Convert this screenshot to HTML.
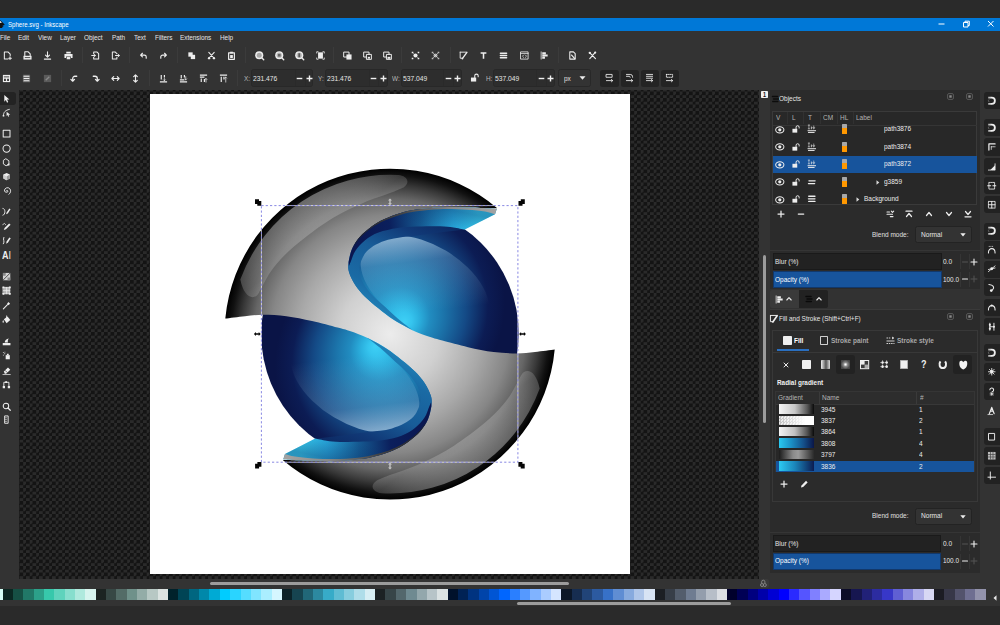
<!DOCTYPE html><html><head><meta charset="utf-8"><title>Sphere.svg - Inkscape</title><style>
*{box-sizing:border-box;margin:0;padding:0}
html,body{width:1000px;height:625px;overflow:hidden;background:#2a2a2a}
body{position:relative;font-family:"Liberation Sans","DejaVu Sans",sans-serif;font-size:7.55px;color:#e0e0e0;line-height:1}
.a{position:absolute}
.t{position:absolute;white-space:nowrap;line-height:10px;height:10px;transform:scaleX(0.86);transform-origin:0 50%}
.b{font-weight:bold}
svg{position:absolute;overflow:visible;stroke-width:1.15}
.ic{fill:none;stroke:#eee;stroke-linecap:round;stroke-linejoin:round}
.fi{fill:#eee;stroke:none}
</style></head><body>
<div class="a" style="left:0px;top:0px;width:1000px;height:18px;background:#2a2a2a;"></div>
<div class="a" style="left:0px;top:18px;width:1000px;height:12.5px;background:#0078d7;"></div>
<div class="a" style="left:0px;top:30.5px;width:1000px;height:59.5px;background:#333333;"></div>
<div class="t " style="left:8px;top:19.6px;color:#ffffff;font-size:7.09px;">Sphere.svg - Inkscape</div>
<svg style="left:-4px;top:20px" width="9" height="9" viewBox="0 0 9 9"><path d="M4.5 0.3 L8.6 4.4 Q8.8 5 8 5.2 L6.5 5.6 L7.6 6.6 L6 7 L6.6 8 L2.2 8 L3 7 L1.2 6.6 L2.5 5.6 L1 5.2 Q0.2 5 0.4 4.4 Z" fill="#111"/><path d="M4.5 1 L6.3 2.9 L5.3 2.5 L4.5 3 L3.7 2.5 L2.7 2.9 Z" fill="#fff"/></svg>
<svg style="left:930px;top:18px" width="70" height="12" viewBox="0 0 70 12"><g stroke="#fff" stroke-width="1" fill="none"><path d="M8.5 6h6"/><path d="M33.5 4.5h4.5v4.5h-4.5z M35 4.5v-1.3h4.3v4.3h-1.3"/><path d="M58 3l5.5 5.5M63.5 3l-5.500 5.5"/></g></svg>
<div class="t " style="left:0px;top:32.5px;color:#e4e4e4;font-size:7.44px;">File</div>
<div class="t " style="left:18px;top:32.5px;color:#e4e4e4;font-size:7.44px;">Edit</div>
<div class="t " style="left:38px;top:32.5px;color:#e4e4e4;font-size:7.44px;">View</div>
<div class="t " style="left:60px;top:32.5px;color:#e4e4e4;font-size:7.44px;">Layer</div>
<div class="t " style="left:84px;top:32.5px;color:#e4e4e4;font-size:7.44px;">Object</div>
<div class="t " style="left:112px;top:32.5px;color:#e4e4e4;font-size:7.44px;">Path</div>
<div class="t " style="left:134px;top:32.5px;color:#e4e4e4;font-size:7.44px;">Text</div>
<div class="t " style="left:155px;top:32.5px;color:#e4e4e4;font-size:7.44px;">Filters</div>
<div class="t " style="left:180px;top:32.5px;color:#e4e4e4;font-size:7.44px;">Extensions</div>
<div class="t " style="left:219.5px;top:32.5px;color:#e4e4e4;font-size:7.44px;">Help</div>
<svg style="left:2.50px;top:50.70px" width="9.0" height="9.0" viewBox="0 0 10 10" ><path class="ic" d="M1.5 1h4l2.500 2.500V5M1.500 1v8h4"/><path class="ic" d="M7.800 6.500v3M6.300 8h3" stroke-width="1.2"/></svg>
<svg style="left:22.50px;top:50.70px" width="9.0" height="9.0" viewBox="0 0 10 10" ><path class="fi" d="M0.500 5.300h9v4.200h-9z"/><path class="ic" d="M2 5v-4.200h3.500l2.500 2.500v1.700" stroke-width="1.200"/><path d="M2 7.300h6" stroke="#333" stroke-width="0.900"/></svg>
<svg style="left:43.00px;top:50.70px" width="9.0" height="9.0" viewBox="0 0 10 10" ><path class="ic" d="M5 1v5.500M2.800 4.500l2.200 2.300l2.200-2.300M1.500 9h7" stroke-width="1.2"/></svg>
<svg style="left:63.50px;top:50.70px" width="9.0" height="9.0" viewBox="0 0 10 10" ><path class="fi" d="M0.500 3.300h9v4.500h-1.800v-1.800h-5.400v1.800h-1.800z"/><path class="fi" d="M2.500 0.800h5v2h-5z"/><path class="fi" d="M3 6.700h4v2.500h-4z"/></svg>
<svg style="left:91.25px;top:50.70px" width="9.0" height="9.0" viewBox="0 0 10 10" ><path class="ic" d="M3 3v-2h3.500l2 2v6h-5.500v-2"/><path class="ic" d="M0.800 5h4M3.300 3.600l1.500 1.400l-1.500 1.400" stroke-width="1.1"/></svg>
<svg style="left:111.00px;top:50.70px" width="9.0" height="9.0" viewBox="0 0 10 10" ><path class="ic" d="M6.500 3l-2-2h-3v8h5v-2M6.500 3"/><path class="ic" d="M5 5h4.200M7.800 3.600l1.500 1.400l-1.500 1.400" stroke-width="1.1"/></svg>
<svg style="left:138.75px;top:50.70px" width="9.0" height="9.0" viewBox="0 0 10 10" ><path class="ic" d="M2 4.500h4a2 2 0 0 1 2 2v1.500M3.800 2.500l-2 2l2 2" stroke-width="1.3"/></svg>
<svg style="left:158.50px;top:50.70px" width="9.0" height="9.0" viewBox="0 0 10 10" ><path class="ic" d="M8 4.500h-4a2 2 0 0 0 -2 2v1.500M6.200 2.500l2 2l-2 2" stroke-width="1.3"/></svg>
<svg style="left:186.75px;top:50.70px" width="9.0" height="9.0" viewBox="0 0 10 10" ><path class="fi" d="M1.500 1.500h4.800v4.800h-4.800z"/><path class="fi" d="M4.200 4.200h4.800v4.800h-4.800z" stroke="#333" stroke-width="0.900"/></svg>
<svg style="left:207.25px;top:50.70px" width="9.0" height="9.0" viewBox="0 0 10 10" ><path class="ic" d="M2 1.500l5.500 6M8 1.500l-5.500 6" stroke-width="1.2"/><circle class="fi" cx="2.300" cy="8" r="1.300"/><circle class="fi" cx="7.700" cy="8" r="1.300"/></svg>
<svg style="left:226.75px;top:50.70px" width="9.0" height="9.0" viewBox="0 0 10 10" ><path class="ic" d="M1.800 2h6.400v7.300h-6.400z" stroke-width="1.3"/><path class="fi" d="M3.500 0.800h3v2h-3z"/><path class="fi" d="M3.500 4.500h3v3.300h-3z"/></svg>
<svg style="left:255.00px;top:50.70px" width="9.0" height="9.0" viewBox="0 0 10 10" ><circle class="fi" cx="4.700" cy="4.700" r="4.500"/><circle cx="4.700" cy="4.700" r="2.800" fill="#a8a8a8"/><path class="ic" d="M8 8l1.700 1.700" stroke-width="1.500"/></svg>
<svg style="left:275.00px;top:50.70px" width="9.0" height="9.0" viewBox="0 0 10 10" ><circle class="fi" cx="4.700" cy="4.700" r="4.500"/><circle cx="4.700" cy="4.700" r="2.900" fill="#b8b8b8"/><path d="M3.200 3.200h3v3h-3z" fill="#666"/><path class="ic" d="M8 8l1.700 1.700" stroke-width="1.500"/></svg>
<svg style="left:295.00px;top:50.70px" width="9.0" height="9.0" viewBox="0 0 10 10" ><circle class="fi" cx="4.700" cy="4.700" r="4.500"/><circle cx="4.700" cy="4.700" r="2.900" fill="#b8b8b8"/><path d="M3.700 2.500h2v4.400h-2z" fill="#555"/><path class="ic" d="M8 8l1.700 1.700" stroke-width="1.500"/></svg>
<svg style="left:315.50px;top:50.70px" width="9.0" height="9.0" viewBox="0 0 10 10" ><path class="fi" d="M2.300 1.500h5.400v7h-5.400z"/><path class="ic" d="M0.800 2.300v-1.500h1.500M7.700 0.800h1.500v1.500M9.200 7.700v1.500h-1.500M2.300 9.200h-1.500v-1.500" stroke-width="0.900"/></svg>
<svg style="left:343.00px;top:50.70px" width="9.0" height="9.0" viewBox="0 0 10 10" ><path class="ic" d="M1.200 1.200h5.500v5.500h-5.500z" stroke-width="1.100"/><path class="fi" d="M3.800 3.800h5.700v5.700h-5.700z"/></svg>
<svg style="left:363.00px;top:50.70px" width="9.0" height="9.0" viewBox="0 0 10 10" ><path class="ic" d="M1.200 1.200h5.500v5.500h-5.500z" stroke-width="1.100"/><path d="M3.800 3.800h5.500v5.500h-5.500z" fill="#333" stroke="#eee" stroke-width="1.100"/><path class="fi" d="M5.300 6.500h2.500v2h-2.500z"/></svg>
<svg style="left:383.00px;top:50.70px" width="9.0" height="9.0" viewBox="0 0 10 10" ><path class="ic" d="M1.200 1.200h5.500v5.500h-5.500z" stroke-width="1.100"/><path d="M3.800 3.800h5.500v5.500h-5.500z" fill="#333" stroke="#eee" stroke-width="1.100"/><path class="fi" d="M5 6.500h3.200v2.200h-3.200z"/></svg>
<svg style="left:411.00px;top:50.70px" width="9.0" height="9.0" viewBox="0 0 10 10" ><circle class="fi" cx="5" cy="5" r="2.3"/><path class="fi" d="M0.800 0.800h1.800v1.800h-1.800zM7.400 0.800h1.800v1.800h-1.800zM0.800 7.400h1.800v1.800h-1.800zM7.400 7.400h1.800v1.800h-1.800z"/><path class="ic" d="M2.800 2.800l0.800 0.800M7.200 7.200l-0.800-0.800" stroke-width="0.6"/></svg>
<svg style="left:431.25px;top:50.70px" width="9.0" height="9.0" viewBox="0 0 10 10" ><circle cx="5" cy="5" r="2.3" fill="#aaa"/><path d="M0.800 0.800h1.800v1.800h-1.800zM7.400 0.800h1.800v1.800h-1.800zM0.800 7.400h1.800v1.800h-1.800zM7.400 7.400h1.800v1.800h-1.800z" fill="#bbb"/><path class="ic" d="M2.600 2.600l4.800 4.800M7.400 2.600l-4.800 4.800" stroke-width="0.6" stroke="#999"/></svg>
<svg style="left:458.50px;top:50.70px" width="9.0" height="9.0" viewBox="0 0 10 10" ><path class="ic" d="M1.300 1.300h7M1.300 1.300v6.700h2.500" stroke-width="1" stroke="#ccc"/><path class="ic" d="M8.800 1.500l-4.500 6.200" stroke-width="1.500"/><circle class="fi" cx="3.800" cy="8.400" r="1"/></svg>
<svg style="left:479.25px;top:50.70px" width="9.0" height="9.0" viewBox="0 0 10 10" ><path class="ic" d="M1.800 2.200h6.400M5 2.200v6.300" stroke-width="1.700" style="stroke-linecap:butt"/></svg>
<svg style="left:499.25px;top:50.70px" width="9.0" height="9.0" viewBox="0 0 10 10" ><path class="ic" d="M1.500 2.500h7M1.500 5h7M1.500 7.500h7" stroke-width="1.500"/></svg>
<svg style="left:519.75px;top:50.70px" width="9.0" height="9.0" viewBox="0 0 10 10" ><path class="ic" d="M1 1h8v8h-8z" stroke-width="0.9"/><path class="ic" d="M1 2.800h8" stroke-width="0.8"/><path class="ic" d="M4 4.500l-1.300 1.300l1.300 1.300M6 4.500l1.300 1.300l-1.300 1.300" stroke-width="0.8"/></svg>
<svg style="left:539.75px;top:50.70px" width="9.0" height="9.0" viewBox="0 0 10 10" ><path class="ic" d="M1.300 1v8" stroke-width="0.9"/><path class="fi" d="M2.500 1.500h4v2h-4zM2.500 4h6v2h-6zM2.500 6.500h3v2h-3z"/></svg>
<svg style="left:568.00px;top:50.70px" width="9.0" height="9.0" viewBox="0 0 10 10" ><path class="ic" d="M2 1h4l2 2v6h-6z" stroke-width="1.200"/><path class="ic" d="M4 4.500l3.500 4" stroke-width="1.300"/></svg>
<svg style="left:588.00px;top:50.70px" width="9.0" height="9.0" viewBox="0 0 10 10" ><path class="ic" d="M2 8.500l6-7M1.800 1.800l6.500 6.700" stroke-width="1.300"/><circle class="fi" cx="2" cy="2" r="1.300"/><circle class="fi" cx="8" cy="1.800" r="1.200"/></svg>
<div class="a" style="left:81.5px;top:47px;width:0.7px;height:16px;background:#3b3b3b;"></div>
<div class="a" style="left:129.0px;top:47px;width:0.7px;height:16px;background:#3b3b3b;"></div>
<div class="a" style="left:176.7px;top:47px;width:0.7px;height:16px;background:#3b3b3b;"></div>
<div class="a" style="left:244.7px;top:47px;width:0.7px;height:16px;background:#3b3b3b;"></div>
<div class="a" style="left:333.45px;top:47px;width:0.7px;height:16px;background:#3b3b3b;"></div>
<div class="a" style="left:400.95px;top:47px;width:0.7px;height:16px;background:#3b3b3b;"></div>
<div class="a" style="left:449.7px;top:47px;width:0.7px;height:16px;background:#3b3b3b;"></div>
<div class="a" style="left:558.45px;top:47px;width:0.7px;height:16px;background:#3b3b3b;"></div>
<svg style="left:2.25px;top:73.70px" width="9.0" height="9.0" viewBox="0 0 10 10" ><path class="fi" d="M1 1h8v8h-8z"/><path d="M2 3.200h6" stroke="#333" stroke-width="1"/><path d="M2.300 5.300h2v2.500h-2zM5.700 5.300h2v2.500h-2z" fill="#333"/></svg>
<svg style="left:22.25px;top:73.70px" width="9.0" height="9.0" viewBox="0 0 10 10" ><path d="M1 0.800h8v8.400h-8z" fill="#666"/><path class="ic" d="M2.300 2.500h5.400M2.300 5h5.400M2.300 7.500h5.400" stroke-width="1.300"/></svg>
<svg style="left:42.50px;top:73.70px" width="9.0" height="9.0" viewBox="0 0 10 10" ><path d="M1 1h8v8h-8z" fill="#5a5a5a"/><path d="M3 7l4-4" stroke="#888" stroke-width="1.500"/></svg>
<svg style="left:70.00px;top:73.70px" width="9.0" height="9.0" viewBox="0 0 10 10" ><path class="ic" d="M7.500 2.500h-2a2.500 2.500 0 0 0 -2.500 2.500v2.500M1 6l2 2l2-2" stroke-width="1.400"/></svg>
<svg style="left:90.50px;top:73.70px" width="9.0" height="9.0" viewBox="0 0 10 10" ><path class="ic" d="M2.500 2.500h2a2.500 2.500 0 0 1 2.500 2.500v2.500M5 6l2 2l2-2" stroke-width="1.400"/></svg>
<svg style="left:111.00px;top:73.70px" width="9.0" height="9.0" viewBox="0 0 10 10" ><path class="ic" d="M1.300 5h7.400M3 3l-2 2l2 2M7 3l2 2l-2 2" stroke-width="1.300"/></svg>
<svg style="left:131.00px;top:73.70px" width="9.0" height="9.0" viewBox="0 0 10 10" ><path class="ic" d="M5 1.300v7.400M3 3l2-2l2 2M3 7l2 2l2-2" stroke-width="1.300"/></svg>
<svg style="left:158.50px;top:73.70px" width="9.0" height="9.0" viewBox="0 0 10 10" ><path class="ic" d="M2.500 1v5M6 1v3M1 8.800h8" stroke-width="1.300" style="stroke-linecap:butt"/><path class="ic" d="M6 5v2.500M5 6.500l1 1l1-1" stroke-width="0.8"/></svg>
<svg style="left:178.75px;top:73.70px" width="9.0" height="9.0" viewBox="0 0 10 10" ><path class="ic" d="M2.500 1v4M6 1v3M1 6.500h5M1 8.800h8" stroke-width="1.300" style="stroke-linecap:butt"/><path class="ic" d="M7.500 3v3.500M6.500 5.500l1 1l1-1" stroke-width="0.8"/></svg>
<svg style="left:199.25px;top:73.70px" width="9.0" height="9.0" viewBox="0 0 10 10" ><path class="ic" d="M1 1.200h8M1 3.500h5M2.500 5v4M6 5.500v3.500" stroke-width="1.300" style="stroke-linecap:butt"/><path class="ic" d="M7.800 9v-4M6.800 6l1-1l1 1" stroke-width="0.8"/></svg>
<svg style="left:219.25px;top:73.70px" width="9.0" height="9.0" viewBox="0 0 10 10" ><path class="ic" d="M1 1.200h8M2.500 3v6M5.500 3v3" stroke-width="1.300" style="stroke-linecap:butt"/><path class="ic" d="M7.500 9v-5.500M6.500 4.500l1-1l1 1" stroke-width="0.8"/></svg>
<div class="a" style="left:60.5px;top:70px;width:0.7px;height:16px;background:#3b3b3b;"></div>
<div class="a" style="left:149.2px;top:70px;width:0.7px;height:16px;background:#3b3b3b;"></div>
<div class="a" style="left:237.2px;top:70px;width:0.7px;height:16px;background:#3b3b3b;"></div>
<div class="a" style="left:250.8px;top:69.2px;width:62.69999999999999px;height:17.4px;background:#2d2d2d;border:0.8px solid #282828;border-radius:2.5px"></div>
<div class="a" style="left:294.8px;top:70.2px;width:0.6px;height:15.6px;background:#2a2a2a;"></div>
<div class="a" style="left:304.55px;top:70.2px;width:0.6px;height:15.6px;background:#2a2a2a;"></div>
<div class="t " style="left:243.8px;top:73.6px;color:#b8b8b8;font-size:7.44px;">X:</div>
<div class="t " style="left:252.5px;top:73.6px;color:#e6e6e6;font-size:7.79px;">231.476</div>
<svg style="left:296.3px;top:74.8px" width="7" height="7" viewBox="0 0 7 7"><path d="M0.700 3.500h5.600" stroke="#f0f0f0" stroke-width="1.400"/></svg>
<svg style="left:305.8px;top:74.8px" width="7" height="7" viewBox="0 0 7 7"><path d="M0.500 3.500h6M3.500 0.500v6" stroke="#f0f0f0" stroke-width="1.400"/></svg>
<div class="a" style="left:325px;top:69.2px;width:62.5px;height:17.4px;background:#2d2d2d;border:0.8px solid #282828;border-radius:2.5px"></div>
<div class="a" style="left:368.8px;top:70.2px;width:0.6px;height:15.6px;background:#2a2a2a;"></div>
<div class="a" style="left:378.4px;top:70.2px;width:0.6px;height:15.6px;background:#2a2a2a;"></div>
<div class="t " style="left:317.8px;top:73.6px;color:#b8b8b8;font-size:7.44px;">Y:</div>
<div class="t " style="left:327px;top:73.6px;color:#e6e6e6;font-size:7.79px;">231.476</div>
<svg style="left:370.3px;top:74.8px" width="7" height="7" viewBox="0 0 7 7"><path d="M0.700 3.500h5.600" stroke="#f0f0f0" stroke-width="1.400"/></svg>
<svg style="left:379.5px;top:74.8px" width="7" height="7" viewBox="0 0 7 7"><path d="M0.500 3.500h6M3.500 0.500v6" stroke="#f0f0f0" stroke-width="1.400"/></svg>
<div class="a" style="left:401px;top:69.2px;width:61.19999999999999px;height:17.4px;background:#2d2d2d;border:0.8px solid #282828;border-radius:2.5px"></div>
<div class="a" style="left:443px;top:70.2px;width:0.6px;height:15.6px;background:#2a2a2a;"></div>
<div class="a" style="left:452.6px;top:70.2px;width:0.6px;height:15.6px;background:#2a2a2a;"></div>
<div class="t " style="left:391.8px;top:73.6px;color:#b8b8b8;font-size:7.44px;">W:</div>
<div class="t " style="left:402.8px;top:73.6px;color:#e6e6e6;font-size:7.79px;">537.049</div>
<svg style="left:444.5px;top:74.8px" width="7" height="7" viewBox="0 0 7 7"><path d="M0.700 3.500h5.600" stroke="#f0f0f0" stroke-width="1.400"/></svg>
<svg style="left:453.7px;top:74.8px" width="7" height="7" viewBox="0 0 7 7"><path d="M0.500 3.500h6M3.500 0.500v6" stroke="#f0f0f0" stroke-width="1.400"/></svg>
<div class="a" style="left:492.5px;top:69.2px;width:62.5px;height:17.4px;background:#2d2d2d;border:0.8px solid #282828;border-radius:2.5px"></div>
<div class="a" style="left:536.3px;top:70.2px;width:0.6px;height:15.6px;background:#2a2a2a;"></div>
<div class="a" style="left:545.9px;top:70.2px;width:0.6px;height:15.6px;background:#2a2a2a;"></div>
<div class="t " style="left:486px;top:73.6px;color:#b8b8b8;font-size:7.44px;">H:</div>
<div class="t " style="left:494.5px;top:73.6px;color:#e6e6e6;font-size:7.79px;">537.049</div>
<svg style="left:537.8px;top:74.8px" width="7" height="7" viewBox="0 0 7 7"><path d="M0.700 3.500h5.600" stroke="#f0f0f0" stroke-width="1.400"/></svg>
<svg style="left:547.0px;top:74.8px" width="7" height="7" viewBox="0 0 7 7"><path d="M0.500 3.500h6M3.500 0.500v6" stroke="#f0f0f0" stroke-width="1.400"/></svg>
<svg style="left:469.75px;top:73.25px" width="9.5" height="9.5" viewBox="0 0 10 10" ><path class="fi" d="M1 4.800h5.500v4.200h-5.500z"/><path class="ic" d="M5 4.800v-1.800a1.800 1.800 0 0 1 3.600 0v1" stroke-width="1.100"/></svg>
<div class="a" style="left:558.3px;top:69.2px;width:33px;height:17.4px;background:#333333;border:0.8px solid #282828;border-radius:2.5px"></div>
<div class="t " style="left:564.3px;top:73.6px;color:#e0e0e0;font-size:7.56px;">px</div>
<svg style="left:578.500px;top:76.300px" width="7" height="4" viewBox="0 0 7 4"><path d="M0.500 0.300h6l-3 3.400z" fill="#eee"/></svg>
<div class="a" style="left:600px;top:69.5px;width:18.6px;height:17.3px;background:#242424;border-radius:2.5px"></div>
<svg style="left:604.55px;top:73.45px" width="9.5" height="9.5" viewBox="0 0 10 10" ><path class="ic" d="M1.500 1.500h6v3h-6z" stroke-width="0.9"/><path class="ic" d="M1.500 8h6.500M6.800 6.800l1.300 1.200l-1.300 1.200" stroke-width="0.9"/></svg>
<div class="a" style="left:620.5px;top:69.5px;width:18.6px;height:17.3px;background:#242424;border-radius:2.5px"></div>
<svg style="left:625.05px;top:73.45px" width="9.5" height="9.5" viewBox="0 0 10 10" ><path class="ic" d="M1.500 1.500h4a2.500 2.500 0 0 1 2.500 2.500v0.500M1.500 3.500h3a1 1 0 0 1 1 1" stroke-width="0.9"/><path class="ic" d="M1.500 8h6.500M6.800 6.800l1.300 1.200l-1.300 1.200" stroke-width="0.9"/></svg>
<div class="a" style="left:640.8px;top:69.5px;width:18.6px;height:17.3px;background:#242424;border-radius:2.5px"></div>
<svg style="left:645.35px;top:73.45px" width="9.5" height="9.5" viewBox="0 0 10 10" ><path class="ic" d="M1.500 1.500h6.500M1.500 3.500h6.500M1.500 5.500h6.500" stroke-width="0.9"/><path class="ic" d="M1.500 8h6.500M6.800 6.800l1.300 1.200l-1.300 1.200" stroke-width="0.9"/></svg>
<div class="a" style="left:660.8px;top:69.5px;width:18.6px;height:17.3px;background:#242424;border-radius:2.5px"></div>
<svg style="left:665.35px;top:73.45px" width="9.5" height="9.5" viewBox="0 0 10 10" ><path class="ic" d="M1.500 1.500h6.500v3h-6.500z" stroke-width="0.9" stroke-dasharray="1 1"/><path class="ic" d="M1.500 8h6.500M6.800 6.800l1.300 1.200l-1.300 1.200" stroke-width="0.9"/></svg>
<div class="a" style="left:0px;top:90px;width:19.25px;height:500px;background:#333333;"></div>
<div class="a" style="left:0;top:91.800px;width:15.500px;height:13.400px;background:#232323;border-radius:0 3px 3px 0"></div>
<svg style="left:2.20px;top:93.60px" width="9.2" height="9.2" viewBox="0 0 10 10" ><path class="fi" d="M2.500 1l5.500 5h-2.500l1.300 2.800l-1.300 0.600l-1.300-2.800l-1.700 1.700z"/></svg>
<svg style="left:2.20px;top:108.00px" width="9.2" height="9.2" viewBox="0 0 10 10" ><path class="ic" d="M1.500 8.500c0-4 2-6 6.500-7" stroke-width="1"/><path class="fi" d="M5 4l4 3.300h-2l0.800 1.800l-1 0.400l-0.800-1.800l-1 1z"/><path class="fi" d="M0.800 7.500h1.700v1.700h-1.700z"/></svg>
<svg style="left:2.20px;top:129.20px" width="9.2" height="9.2" viewBox="0 0 10 10" ><path class="ic" d="M1.300 1.300h7.400v7.400h-7.400z" stroke-width="1.100"/></svg>
<svg style="left:2.20px;top:143.90px" width="9.2" height="9.2" viewBox="0 0 10 10" ><circle class="ic" cx="5" cy="5" r="3.900" stroke-width="1.100"/></svg>
<svg style="left:2.20px;top:158.00px" width="9.2" height="9.2" viewBox="0 0 10 10" ><path class="ic" d="M4.500 1l3 2v3.500l-3 2l-3-2v-3.500z" stroke-width="1"/><path class="fi" d="M7 6l2.300 0.500l-1.600 0.800l0.300 1.700l-1.300-1.200l-1.400 0.800l0.700-1.500z"/></svg>
<svg style="left:2.20px;top:172.00px" width="9.2" height="9.2" viewBox="0 0 10 10" ><path class="fi" d="M5 1l3.500 1.800v4.400l-3.500 1.800l-3.500-1.800v-4.400z"/><path d="M5 5v4l3.500-1.800v-4.400z" fill="#999"/><path d="M5 5l-3.500-2.200v4.400l3.500 1.800z" fill="#ccc"/></svg>
<svg style="left:2.20px;top:186.40px" width="9.2" height="9.2" viewBox="0 0 10 10" ><path class="ic" d="M5 5a1 1 0 0 1 1.500 1a2.300 2.300 0 0 1 -3.800 -0.500a3.300 3.300 0 0 1 5.800 -2.500a4 4 0 0 1 -1 6" stroke-width="1"/></svg>
<svg style="left:2.20px;top:207.20px" width="9.2" height="9.2" viewBox="0 0 10 10" ><path class="ic" d="M1 1.500c3 0 3 7 0 7.500" stroke-width="1"/><path class="fi" d="M5 6l3-4.500l1.300 1l-3 4.500l-1.800 0.800z"/></svg>
<svg style="left:2.20px;top:222.00px" width="9.2" height="9.2" viewBox="0 0 10 10" ><path class="ic" d="M1 3c1-2 2-2 3 0" stroke-width="0.900"/><path class="fi" d="M2 8.800l0.800-2.300l5-5l1.500 1.500l-5 5z"/></svg>
<svg style="left:2.20px;top:236.40px" width="9.2" height="9.2" viewBox="0 0 10 10" ><path class="ic" d="M2 1.500c-1.500 3 1.500 4-0.500 7" stroke-width="1"/><path class="fi" d="M4.500 8.500l0.500-2.500l3-4.500l1.500 1l-3 4.500z"/></svg>
<svg style="left:2.20px;top:271.60px" width="9.2" height="9.2" viewBox="0 0 10 10" ><path class="fi" d="M1 1h8v8h-8z" opacity="0.850"/><path d="M1 9l8-8" stroke="#444" stroke-width="1"/><path d="M1 1h3v3h-3zM6 6h3v3h-3z" fill="#888"/></svg>
<svg style="left:2.20px;top:286.40px" width="9.2" height="9.2" viewBox="0 0 10 10" ><path class="fi" d="M1.500 1.500h7v7h-7z" opacity="0.700"/><path class="ic" d="M1.500 1.500h7v7h-7zM1.500 5h7M5 1.500v7" stroke-width="0.800"/><path class="fi" d="M0.500 0.500h2v2h-2zM7.500 0.500h2v2h-2zM0.500 7.500h2v2h-2zM7.500 7.500h2v2h-2z"/></svg>
<svg style="left:2.20px;top:300.80px" width="9.2" height="9.2" viewBox="0 0 10 10" ><path class="ic" d="M1.500 8.500l4.500-4.500" stroke-width="1.200"/><path class="fi" d="M5.500 3l1.500-1.800l1.800 1.800l-1.800 1.500z"/></svg>
<svg style="left:2.20px;top:315.20px" width="9.2" height="9.2" viewBox="0 0 10 10" ><path class="fi" d="M2 4.500l4-3l3 4l-4 3.500z"/><path class="fi" d="M1.300 5.500c-1 1.500-1 3 0 3s1-1.500 0-3z"/><path class="ic" d="M5 1v3" stroke-width="0.900"/></svg>
<svg style="left:2.20px;top:337.00px" width="9.2" height="9.2" viewBox="0 0 10 10" ><path class="fi" d="M0.800 9v-2.500h8.400v2.500z"/><path class="fi" d="M3 6c0-2.500 1.500-4 4.500-4.500c-1 1-1.500 2.500-1 4.500z"/></svg>
<svg style="left:2.20px;top:351.40px" width="9.2" height="9.2" viewBox="0 0 10 10" ><path class="fi" d="M4 4.500h4.500v4.500h-4.500z"/><path class="fi" d="M5.300 3h2v1.500h-2z"/><path class="fi" d="M1 1h1v1h-1zM2.500 2.500h1v1h-1zM1 4h1v1h-1zM2.800 0.800h0.800v0.800h-0.800z"/></svg>
<svg style="left:2.20px;top:365.80px" width="9.2" height="9.2" viewBox="0 0 10 10" ><path class="fi" d="M2 6l4.500-4.500l2.500 2.500l-4.500 4.500h-1.500z"/><path d="M3.300 4.700l2.500 2.500" stroke="#333" stroke-width="0.800"/><path class="ic" d="M1 9.300h8" stroke-width="0.800"/></svg>
<svg style="left:2.20px;top:379.60px" width="9.2" height="9.2" viewBox="0 0 10 10" ><path class="ic" d="M2 7v-4.500h5.500v4.500" stroke-width="1"/><path class="fi" d="M0.800 6.500h2.500v2.500h-2.500zM6.300 6.500h2.500v2.500h-2.500zM3.500 1.300h2v2h-2z"/></svg>
<svg style="left:2.20px;top:401.60px" width="9.2" height="9.2" viewBox="0 0 10 10" ><circle class="ic" cx="4.300" cy="4.300" r="3" stroke-width="1.100"/><path class="ic" d="M6.500 6.500l2.500 2.500" stroke-width="1.300"/></svg>
<svg style="left:2.20px;top:415.40px" width="9.2" height="9.2" viewBox="0 0 10 10" ><path class="ic" d="M3.300 1h3.400v8h-3.400z" stroke-width="1"/><path class="ic" d="M3.500 3h1.500M3.500 5h1.500M3.500 7h1.500" stroke-width="0.600"/></svg>
<div class="t b" style="left:2.2px;top:250.6px;color:#eeeeee;font-size:10.47px;">A<span style="font-weight:normal">I</span></div>
<div class="a" id="canvas" style="left:19.25px;top:90px;width:739.75px;height:489px;overflow:hidden;background-color:#141414;background-image:conic-gradient(#2a2a2a 25%,#141414 0 50%,#2a2a2a 0 75%,#141414 0);background-size:6.5px 6.5px;background-position:0.5px 1.5px"></div>
<div class="a" style="left:150.4px;top:94.4px;width:479.6px;height:480px;background:#ffffff;"></div>
<svg class="a" style="left:0;top:0" width="1000" height="625" viewBox="0 0 1000 625">
<defs>
<radialGradient id="gBall" gradientUnits="userSpaceOnUse" cx="385" cy="302" r="120" fx="405" fy="322"><stop offset="0" stop-color="#3ed0f6"/><stop offset="0.07" stop-color="#35c4ee"/><stop offset="0.14" stop-color="#2bb0de"/><stop offset="0.25" stop-color="#218cc0"/><stop offset="0.376" stop-color="#1c76ac"/><stop offset="0.61" stop-color="#144a86"/><stop offset="0.83" stop-color="#0c1c54"/><stop offset="1" stop-color="#0a1446"/></radialGradient>
<clipPath id="cHalf"><path d="M190 244.1L590 424.1V120H190Z"/></clipPath>
<radialGradient id="gShell" gradientUnits="userSpaceOnUse" cx="390.0" cy="334.1" r="165.4"><stop offset="0" stop-color="#ececec"/><stop offset="0.3" stop-color="#d0d0d0"/><stop offset="0.55" stop-color="#a8a8a8"/><stop offset="0.72" stop-color="#868686"/><stop offset="0.82" stop-color="#666"/><stop offset="0.9" stop-color="#383838"/><stop offset="0.96" stop-color="#111"/><stop offset="1" stop-color="#000"/></radialGradient>
<linearGradient id="gUnder" gradientUnits="userSpaceOnUse" x1="352" y1="240" x2="480" y2="228"><stop offset="0" stop-color="#0a1650"/><stop offset="0.3" stop-color="#0b1f5c"/><stop offset="0.55" stop-color="#155a92"/><stop offset="0.8" stop-color="#29ace0"/><stop offset="1" stop-color="#3cdcfc"/></linearGradient>
<linearGradient id="gUnderV" gradientUnits="userSpaceOnUse" x1="440" y1="208" x2="436" y2="228"><stop offset="0" stop-color="#0b2a60" stop-opacity="0.4"/><stop offset="1" stop-color="#0b2a60" stop-opacity="0"/></linearGradient>
<linearGradient id="gEdge" gradientUnits="userSpaceOnUse" x1="350" y1="0" x2="497" y2="0"><stop offset="0" stop-color="#1e1e1e"/><stop offset="0.35" stop-color="#444"/><stop offset="0.7" stop-color="#8a8a8a"/><stop offset="1" stop-color="#a4a4a4"/></linearGradient>
<linearGradient id="gHi" gradientUnits="userSpaceOnUse" x1="376" y1="238" x2="434" y2="312"><stop offset="0" stop-color="#d4ecfa" stop-opacity="0.88"/><stop offset="0.45" stop-color="#b0dcf4" stop-opacity="0.22"/><stop offset="1" stop-color="#b0dcf4" stop-opacity="0"/></linearGradient>
<linearGradient id="gGloss" gradientUnits="userSpaceOnUse" x1="290" y1="200" x2="318" y2="238"><stop offset="0" stop-color="#fff" stop-opacity="0.42"/><stop offset="1" stop-color="#fff" stop-opacity="0.16"/></linearGradient>
<linearGradient id="gRim" gradientUnits="userSpaceOnUse" x1="450" y1="225" x2="400" y2="330"><stop offset="0" stop-color="#0d2a64"/><stop offset="0.2" stop-color="#113a78"/><stop offset="0.45" stop-color="#185c98"/><stop offset="0.75" stop-color="#1a6aa4"/><stop offset="1" stop-color="#2288bd"/></linearGradient>
</defs>
<g id="half">
<circle cx="390.0" cy="334.1" r="128.8" fill="url(#gBall)" clip-path="url(#cHalf)"/>
<ellipse cx="425" cy="286" rx="71" ry="41" transform="rotate(31 425 286)" fill="url(#gHi)"/>
</g>
<use href="#half" transform="rotate(180 390.0 334.1)"/>
<path d="M497.3 208.2 C494.7 208.2 486.9 208.0 482.0 207.9 C477.1 207.8 474.6 207.5 468.0 207.4 C461.4 207.3 450.9 206.8 442.4 207.2 C433.9 207.5 423.9 208.5 416.8 209.5 C409.7 210.5 405.5 211.6 400.0 213.2 C394.5 214.8 388.7 217.1 384.0 219.3 C379.3 221.5 376.1 223.3 372.0 226.3 C367.9 229.3 362.8 233.5 359.5 237.3 C356.2 241.1 353.8 244.9 352.0 249.0 C350.2 253.1 349.1 258.2 348.6 262.0 C348.1 265.8 347.9 268.1 349.0 272.0 C350.1 275.9 352.7 281.2 355.4 285.3 C358.1 289.4 361.2 293.0 365.0 296.8 C368.8 300.6 373.6 304.5 378.4 308.3 C383.2 312.1 387.9 316.1 393.7 319.8 C399.4 323.5 406.8 327.5 412.9 330.4 C419.0 333.3 425.3 335.4 430.2 337.1 C435.1 338.8 436.1 338.9 442.4 340.6 C448.7 342.3 459.5 345.3 468.0 347.2 C476.5 349.1 485.5 351.0 493.6 352.0 C501.7 353.0 509.8 353.4 516.7 353.4 C523.6 353.4 528.7 352.6 535.0 352.0 C541.3 351.4 551.4 350.0 554.7 349.6 A165.4 165.4 0 0 1 282.7 460.0 C285.3 460.0 293.1 460.2 298.0 460.3 C302.9 460.4 305.4 460.7 312.0 460.8 C318.6 460.9 329.1 461.4 337.6 461.0 C346.1 460.7 356.1 459.7 363.2 458.7 C370.3 457.7 374.5 456.6 380.0 455.0 C385.5 453.4 391.3 451.1 396.0 448.9 C400.7 446.7 403.9 444.9 408.0 441.9 C412.1 438.9 417.2 434.7 420.5 430.9 C423.8 427.1 426.2 423.3 428.0 419.2 C429.8 415.1 430.9 410.0 431.4 406.2 C431.9 402.4 432.1 400.1 431.0 396.2 C429.9 392.3 427.3 387.0 424.6 382.9 C421.9 378.8 418.8 375.2 415.0 371.4 C411.2 367.6 406.4 363.7 401.6 359.9 C396.8 356.1 392.1 352.1 386.3 348.4 C380.6 344.7 373.2 340.7 367.1 337.8 C361.0 334.9 354.7 332.8 349.8 331.1 C344.9 329.4 343.9 329.3 337.6 327.6 C331.3 325.9 320.5 322.9 312.0 321.0 C303.5 319.1 294.5 317.2 286.4 316.2 C278.3 315.2 270.2 314.8 263.3 314.8 C256.4 314.8 251.3 315.6 245.0 316.2 C238.7 316.8 228.6 318.2 225.3 318.6 A165.4 165.4 0 0 1 497.3 208.2Z" fill="url(#gShell)"/>
<g id="half2">
<path d="M464.8 229.6 C462.9 229.2 457.6 228.0 453.5 227.4 C449.4 226.8 446.1 226.3 440.0 226.2 C433.9 226.1 423.9 226.3 416.8 226.6 C409.7 226.9 404.0 227.0 397.6 228.0 C391.2 229.0 383.8 230.5 378.4 232.5 C373.0 234.5 368.8 237.2 365.0 240.2 C361.2 243.2 357.8 247.1 355.4 250.7 C353.0 254.3 351.7 259.4 350.6 262.0 C349.5 264.6 349.2 265.3 348.9 266.0 L348.6 262.0 C348.7 263.7 347.9 268.1 349.0 272.0 C350.1 275.9 352.7 281.2 355.4 285.3 C358.1 289.4 361.2 293.0 365.0 296.8 C368.8 300.6 373.6 304.5 378.4 308.3 C383.2 312.1 387.9 316.1 393.7 319.8 C399.4 323.5 409.7 328.6 412.9 330.4 C410.4 328.5 402.6 322.7 398.0 318.8 C393.4 314.9 389.2 310.6 385.0 306.8 C380.8 303.0 376.3 299.3 373.0 295.8 C369.7 292.3 367.1 289.1 365.0 286.0 C362.9 282.9 361.5 280.0 360.5 277.0 C359.5 274.0 359.0 270.8 359.2 268.0 C359.4 265.2 360.4 262.7 361.6 260.0 C362.8 257.3 364.0 254.4 366.4 251.8 C368.8 249.2 372.4 246.6 376.0 244.6 C379.6 242.6 384.0 241.0 388.0 239.8 C392.0 238.6 396.0 238.0 400.0 237.4 C404.0 236.8 407.0 236.8 412.0 236.2 C417.0 235.6 423.7 234.6 430.0 233.8 C436.3 233.0 444.2 232.0 450.0 231.3 C455.8 230.6 462.3 229.9 464.8 229.6Z" fill="url(#gRim)"/>
<path d="M496.7 208.9 C494.2 208.7 486.8 208.2 482.0 207.9 C477.2 207.7 474.6 207.5 468.0 207.4 C461.4 207.3 450.9 206.8 442.4 207.2 C433.9 207.5 423.9 208.5 416.8 209.5 C409.7 210.5 405.5 211.6 400.0 213.2 C394.5 214.8 388.7 217.1 384.0 219.3 C379.3 221.5 376.1 223.3 372.0 226.3 C367.9 229.3 362.8 233.5 359.5 237.3 C356.2 241.1 353.8 244.9 352.0 249.0 C350.2 253.1 349.2 259.8 348.6 262.0 L348.9 266.0 C349.2 265.3 349.5 264.6 350.6 262.0 C351.7 259.4 353.0 254.3 355.4 250.7 C357.8 247.1 361.2 243.2 365.0 240.2 C368.8 237.2 373.0 234.5 378.4 232.5 C383.8 230.5 391.2 229.0 397.6 228.0 C404.0 227.0 409.7 226.9 416.8 226.6 C423.9 226.3 433.9 226.1 440.0 226.2 C446.1 226.3 449.4 226.8 453.5 227.4 C457.6 228.0 462.9 229.2 464.8 229.6 L495 214.3Z" fill="url(#gUnder)"/>
<path d="M496.7 208.9 C494.2 208.7 486.8 208.2 482.0 207.9 C477.2 207.7 474.6 207.5 468.0 207.4 C461.4 207.3 450.9 206.8 442.4 207.2 C433.9 207.5 423.9 208.5 416.8 209.5 C409.7 210.5 405.5 211.6 400.0 213.2 C394.5 214.8 388.7 217.1 384.0 219.3 C379.3 221.5 376.1 223.3 372.0 226.3 C367.9 229.3 362.8 233.5 359.5 237.3 C356.2 241.1 353.8 244.9 352.0 249.0 C350.2 253.1 349.2 259.8 348.6 262.0 L348.9 266.0 C349.2 265.3 349.5 264.6 350.6 262.0 C351.7 259.4 353.0 254.3 355.4 250.7 C357.8 247.1 361.2 243.2 365.0 240.2 C368.8 237.2 373.0 234.5 378.4 232.5 C383.8 230.5 391.2 229.0 397.6 228.0 C404.0 227.0 409.7 226.9 416.8 226.6 C423.9 226.3 433.9 226.1 440.0 226.2 C446.1 226.3 449.4 226.8 453.5 227.4 C457.6 228.0 462.9 229.2 464.8 229.6 L495 214.3Z" fill="url(#gUnderV)"/>
<path d="M496.7 208.9 C494.2 208.7 486.8 208.2 482.0 207.9 C477.2 207.7 474.6 207.5 468.0 207.4 C461.4 207.3 450.9 206.8 442.4 207.2 C433.9 207.5 423.9 208.5 416.8 209.5 C409.7 210.5 405.5 211.6 400.0 213.2 C394.5 214.8 388.7 217.1 384.0 219.3 C379.3 221.5 376.1 223.3 372.0 226.3 C367.9 229.3 362.8 233.5 359.5 237.3 C356.2 241.1 353.2 247.1 352.0 249.0 L352.0 249.0 C353.3 247.1 356.7 241.4 360.0 237.8 C363.3 234.2 368.0 230.4 372.0 227.6 C376.0 224.8 379.3 222.9 384.0 220.8 C388.7 218.7 394.5 216.5 400.0 214.9 C405.5 213.3 410.1 212.2 416.8 211.3 C423.5 210.4 431.6 209.5 440.0 209.2 C448.4 208.9 459.5 209.3 467.0 209.7 C474.5 210.1 480.3 210.8 485.0 211.6 C489.7 212.4 493.3 213.9 495.0 214.3Z" fill="url(#gEdge)"/>
<path d="M240.3 279.6 A159.3 159.3 0 0 1 398.3 175.0 C406.3 175.5 411.3 182.0 403.5 187.5 C401.5 188.3 398.2 190.0 391.4 192.6 C384.6 195.2 372.2 199.0 362.6 203.2 C353.0 207.4 343.3 211.8 333.7 217.6 C324.1 223.3 313.0 231.5 304.9 237.7 C296.8 243.9 290.6 249.2 284.8 255.0 C279.0 260.8 274.6 266.0 270.3 272.3 C266.0 278.6 260.7 289.6 258.8 293.0 C254 301 244 298 240.3 279.6Z" fill="url(#gGloss)"/>
</g>
<use href="#half2" transform="rotate(180 390.0 334.1)"/>
<rect x="261.4" y="205.6" width="256.5" height="256.6" fill="none" stroke="#fff" stroke-opacity="0.75" stroke-width="0.9"/>
<g fill="none" stroke="#7c7ce0" stroke-width="0.9" stroke-dasharray="2.2 2.1"><rect x="261.4" y="205.6" width="256.5" height="256.6"/></g>
<path d="M255.0 199.2h4v1.8h2.300v4.800h-4v-1.800h-2.300z" fill="#050505"/><path d="M524.8 199.2h-4v1.8h-2.300v4.800h4v-1.800h2.300z" fill="#050505"/><path d="M261.4 462.0h-4v1.8h-2.300v4.800h4v-1.800h2.300z" fill="#050505"/><path d="M518.4 462.0h4v1.8h2.300v4.800h-4v-1.800h-2.300z" fill="#050505"/><path d="M253.9 334l2-2v1.300h2.800v-1.300l2 2l-2 2v-1.300h-2.800v1.300z" fill="#050505"/><path d="M519.1 334l2-2v1.300h2.800v-1.300l2 2l-2 2v-1.300h-2.800v1.300z" fill="#050505"/><path d="M390 198.4l2 2h-1.300v2.800h1.300l-2 2l-2-2h1.300v-2.800h-1.300z" fill="#c4c4c4"/><path d="M390 462.6l2 2h-1.300v2.800h1.300l-2 2l-2-2h1.300v-2.800h-1.300z" fill="#c4c4c4"/>
</svg>
<div class="a" style="left:0px;top:579px;width:1000px;height:9.5px;background:#333333;"></div>
<div class="a" style="left:209.5px;top:582.3px;width:359.5px;height:3.2px;background:#9c9c9c;border-radius:2px"></div>
<div class="a" style="left:759px;top:90px;width:10.5px;height:489px;background:#333333;"></div>
<div class="a" style="left:762.6px;top:254.5px;width:3px;height:168.5px;background:#9c9c9c;border-radius:2px"></div>
<div class="a" style="left:769.5px;top:89.5px;width:210px;height:483px;background:#2b2b2b;"></div>
<div class="a" style="left:769.5px;top:572.5px;width:210px;height:7px;background:#333333;"></div>
<div class="a" style="left:760.800px;top:91.400px;width:6.800px;height:6.600px;background:#f2f2f2;border-radius:0.8px"></div>
<div class="t b" style="left:762.8px;top:89.8px;color:#111;font-size:6.40px;">1</div>
<svg style="left:771.500px;top:94.500px" width="7" height="8" viewBox="0 0 7 8"><path d="M0.500 1.500h5M1.500 4h5M0.800 6.500h5" stroke="#0c0c0c" stroke-width="1.500" stroke-linecap="round"/></svg>
<div class="t " style="left:779px;top:93.8px;color:#e6e6e6;font-size:7.56px;">Objects</div>
<svg style="left:946.9px;top:93.1px" width="7" height="7" viewBox="0 0 7 7"><rect x="0.600" y="0.600" width="5.800" height="5.800" rx="1.300" fill="none" stroke="#666" stroke-width="0.800"/><rect x="2.300" y="2.300" width="2.400" height="2.400" fill="#8a8a8a"/></svg>
<svg style="left:966.3px;top:93.1px" width="7" height="7" viewBox="0 0 7 7"><rect x="0.600" y="0.600" width="5.800" height="5.800" rx="1.300" fill="none" stroke="#666" stroke-width="0.800"/><rect x="2.300" y="2.300" width="2.400" height="2.400" fill="#8a8a8a"/></svg>
<div class="a" style="left:772.300px;top:110.500px;width:205px;height:94.300px;background:#282828;border:0.7px solid #3a3a3a"></div>
<div class="t " style="left:775.6px;top:112.6px;color:#b4b4b4;font-size:7.56px;">V</div>
<div class="t " style="left:791.6px;top:112.6px;color:#b4b4b4;font-size:7.56px;">L</div>
<div class="t " style="left:807.6px;top:112.6px;color:#b4b4b4;font-size:7.56px;">T</div>
<div class="t " style="left:823.2px;top:112.6px;color:#b4b4b4;font-size:7.56px;">CM</div>
<div class="t " style="left:840.2px;top:112.6px;color:#b4b4b4;font-size:7.56px;">HL</div>
<div class="t " style="left:856px;top:112.6px;color:#b4b4b4;font-size:7.56px;">Label</div>
<div class="a" style="left:787px;top:111.5px;width:0.6px;height:12.5px;background:#313131;"></div>
<div class="a" style="left:803px;top:111.5px;width:0.6px;height:12.5px;background:#313131;"></div>
<div class="a" style="left:819.5px;top:111.5px;width:0.6px;height:12.5px;background:#313131;"></div>
<div class="a" style="left:836.5px;top:111.5px;width:0.6px;height:12.5px;background:#313131;"></div>
<div class="a" style="left:852.5px;top:111.5px;width:0.6px;height:12.5px;background:#313131;"></div>
<div class="a" style="left:772.8px;top:124.6px;width:204px;height:0.6px;background:#353535;"></div>
<div class="a" style="left:772.8px;top:155.5px;width:204px;height:17.2px;background:#17549c;"></div>
<div class="a" style="left:772.800px;top:111px;width:204px;height:93.300px;overflow:hidden">
<svg style="left:2.40px;top:13.60px" width="9.600" height="9.600" viewBox="0 0 10 10"><ellipse class="ic" cx="5" cy="5" rx="4.300" ry="3.300" stroke-width="1.050"/><circle class="fi" cx="5" cy="5" r="1.700"/></svg>
<svg style="left:17.90px;top:13.10px" width="9.600" height="9.600" viewBox="0 0 10 10"><path class="fi" d="M1.500 5h5v4h-5z"/><path class="ic" d="M5.300 5v-1.600a1.600 1.600 0 0 1 3.200 0v0.800" stroke-width="1"/></svg>
<svg style="left:33.80px;top:13.40px" width="9.600" height="9.600" viewBox="0 0 10 10"><path class="ic" d="M2 1v4M1.300 1.200h1.400M1.300 5h1.400M4.500 3v2M4.500 3.500c1.500-1 1.500 1.500 0 1.500M7 2v3M7 3.500c1.500-1 1.500 1.500 0 1.500" stroke-width="0.550"/><path class="ic" d="M1 7h8M1.500 8.800h6" stroke-width="1"/></svg>
<div class="a" style="left:69.20px;top:13.40px;width:4.600px;height:10px;background:linear-gradient(#a8a8a8 0 38%,#ff9800 38%);border-radius:0.6px"></div>
<div class="t" style="left:111.00px;top:13.40px;color:#ececec">path3876</div>
<svg style="left:2.40px;top:31.20px" width="9.600" height="9.600" viewBox="0 0 10 10"><ellipse class="ic" cx="5" cy="5" rx="4.300" ry="3.300" stroke-width="1.050"/><circle class="fi" cx="5" cy="5" r="1.700"/></svg>
<svg style="left:17.90px;top:30.70px" width="9.600" height="9.600" viewBox="0 0 10 10"><path class="fi" d="M1.500 5h5v4h-5z"/><path class="ic" d="M5.300 5v-1.600a1.600 1.600 0 0 1 3.200 0v0.800" stroke-width="1"/></svg>
<svg style="left:33.80px;top:31.00px" width="9.600" height="9.600" viewBox="0 0 10 10"><path class="ic" d="M2 1v4M1.300 1.200h1.400M1.300 5h1.400M4.500 3v2M4.500 3.500c1.500-1 1.500 1.500 0 1.500M7 2v3M7 3.500c1.500-1 1.500 1.500 0 1.500" stroke-width="0.550"/><path class="ic" d="M1 7h8M1.500 8.800h6" stroke-width="1"/></svg>
<div class="a" style="left:69.20px;top:31.00px;width:4.600px;height:10px;background:linear-gradient(#a8a8a8 0 38%,#ff9800 38%);border-radius:0.6px"></div>
<div class="t" style="left:111.00px;top:31.00px;color:#ececec">path3874</div>
<svg style="left:2.40px;top:48.60px" width="9.600" height="9.600" viewBox="0 0 10 10"><ellipse class="ic" cx="5" cy="5" rx="4.300" ry="3.300" stroke-width="1.050"/><circle class="fi" cx="5" cy="5" r="1.700"/></svg>
<svg style="left:17.90px;top:48.10px" width="9.600" height="9.600" viewBox="0 0 10 10"><path class="fi" d="M1.500 5h5v4h-5z"/><path class="ic" d="M5.300 5v-1.600a1.600 1.600 0 0 1 3.200 0v0.800" stroke-width="1"/></svg>
<svg style="left:33.80px;top:48.40px" width="9.600" height="9.600" viewBox="0 0 10 10"><path class="ic" d="M2 1v4M1.300 1.200h1.400M1.300 5h1.400M4.500 3v2M4.500 3.500c1.500-1 1.500 1.500 0 1.500M7 2v3M7 3.500c1.500-1 1.500 1.500 0 1.500" stroke-width="0.550"/><path class="ic" d="M1 7h8M1.500 8.800h6" stroke-width="1"/></svg>
<div class="a" style="left:69.20px;top:48.40px;width:4.600px;height:10px;background:linear-gradient(#a8a8a8 0 38%,#ff9800 38%);border-radius:0.6px"></div>
<div class="t" style="left:111.00px;top:48.40px;color:#ececec">path3872</div>
<svg style="left:2.40px;top:66.20px" width="9.600" height="9.600" viewBox="0 0 10 10"><ellipse class="ic" cx="5" cy="5" rx="4.300" ry="3.300" stroke-width="1.050"/><circle class="fi" cx="5" cy="5" r="1.700"/></svg>
<svg style="left:17.90px;top:65.70px" width="9.600" height="9.600" viewBox="0 0 10 10"><path class="fi" d="M1.500 5h5v4h-5z"/><path class="ic" d="M5.300 5v-1.600a1.600 1.600 0 0 1 3.200 0v0.800" stroke-width="1"/></svg>
<svg style="left:33.80px;top:66.00px" width="9.600" height="9.600" viewBox="0 0 10 10"><path class="ic" d="M2 4h6.500M1.500 6.800h6.500" stroke-width="1.300"/></svg>
<div class="a" style="left:69.20px;top:66.00px;width:4.600px;height:10px;background:linear-gradient(#a8a8a8 0 38%,#ff9800 38%);border-radius:0.6px"></div>
<div class="t" style="left:111.20px;top:66.00px;color:#ececec">g3859</div>
<svg style="left:103.00px;top:68.50px" width="4" height="5" viewBox="0 0 4 5"><path d="M0.500 0.300l2.800 2.200l-2.800 2.200z" fill="#d8d8d8"/></svg>
<svg style="left:2.40px;top:83.60px" width="9.600" height="9.600" viewBox="0 0 10 10"><ellipse class="ic" cx="5" cy="5" rx="4.300" ry="3.300" stroke-width="1.050"/><circle class="fi" cx="5" cy="5" r="1.700"/></svg>
<svg style="left:17.90px;top:83.10px" width="9.600" height="9.600" viewBox="0 0 10 10"><path class="fi" d="M1.500 5h5v4h-5z"/><path class="ic" d="M5.300 5v-1.600a1.600 1.600 0 0 1 3.200 0v0.800" stroke-width="1"/></svg>
<svg style="left:33.80px;top:83.40px" width="9.600" height="9.600" viewBox="0 0 10 10"><path class="ic" d="M1.800 2.300h6.500M1.500 5h6.800M1.800 7.700h6.500" stroke-width="1.400"/></svg>
<div class="a" style="left:69.20px;top:83.40px;width:4.600px;height:10px;background:linear-gradient(#a8a8a8 0 38%,#ff9800 38%);border-radius:0.6px"></div>
<div class="t" style="left:91.60px;top:83.40px;color:#ececec">Background</div>
<svg style="left:83.20px;top:85.90px" width="4" height="5" viewBox="0 0 4 5"><path d="M0.500 0.300l2.800 2.200l-2.800 2.200z" fill="#d8d8d8"/></svg>
</div>
<svg style="left:777.2px;top:210.0px" width="8" height="8" viewBox="0 0 8 8"><path d="M1 4h6M4 1v6" fill="none" stroke="#ececec" stroke-width="1.25" stroke-linecap="round" stroke-linejoin="round"/></svg>
<svg style="left:797.0px;top:210.0px" width="8" height="8" viewBox="0 0 8 8"><path d="M1.300 4h5.400" fill="none" stroke="#ececec" stroke-width="1.25" stroke-linecap="round" stroke-linejoin="round"/></svg>
<svg style="left:885.5px;top:210.0px" width="8" height="8" viewBox="0 0 8 8"><path d="M1 2h2.500M1 4.300h5.500M4.300 6.600h2.700M5.300 1.200l1.200 1.200l1.200-1.200" fill="none" stroke="#ececec" stroke-width="1.1" stroke-linecap="round" stroke-linejoin="round"/></svg>
<svg style="left:905.0px;top:210.0px" width="8" height="8" viewBox="0 0 8 8"><path d="M1 1.200h6M1.500 6.500l2.500-3l2.500 3" fill="none" stroke="#ececec" stroke-width="1.25" stroke-linecap="round" stroke-linejoin="round"/></svg>
<svg style="left:924.5px;top:210.0px" width="8" height="8" viewBox="0 0 8 8"><path d="M1.500 5.500l2.500-3l2.500 3" fill="none" stroke="#ececec" stroke-width="1.25" stroke-linecap="round" stroke-linejoin="round"/></svg>
<svg style="left:944.5px;top:210.0px" width="8" height="8" viewBox="0 0 8 8"><path d="M1.500 2.500l2.500 3l2.500-3" fill="none" stroke="#ececec" stroke-width="1.25" stroke-linecap="round" stroke-linejoin="round"/></svg>
<svg style="left:964.0px;top:210.0px" width="8" height="8" viewBox="0 0 8 8"><path d="M1 6.800h6M1.500 1.500l2.500 3l2.500-3" fill="none" stroke="#ececec" stroke-width="1.25" stroke-linecap="round" stroke-linejoin="round"/></svg>
<div class="t " style="left:872px;top:229.5px;color:#e0e0e0;font-size:7.56px;">Blend mode:</div>
<div class="a" style="left:914.600px;top:225.8px;width:57.200px;height:17.600px;background:#333333;border:0.8px solid #232323;border-radius:2.5px"></div>
<div class="t " style="left:920.7px;top:229.5px;color:#e6e6e6;font-size:7.67px;">Normal</div>
<svg style="left:959.500px;top:233.0px" width="6" height="4" viewBox="0 0 6 4"><path d="M0.300 0.300h5.400l-2.700 3.200z" fill="#eee"/></svg>
<div class="a" style="left:769.5px;top:249.8px;width:210px;height:0.6px;background:#353535;"></div>
<div class="a" style="left:772.500px;top:253.4px;width:169px;height:16.500px;background:#222222;border:0.6px solid #1a1a1a"></div>
<div class="t " style="left:774.6px;top:256.8px;color:#e6e6e6;font-size:7.56px;">Blur (%)</div>
<div class="t " style="left:943.2px;top:256.8px;color:#e6e6e6;font-size:7.56px;">0.0</div>
<svg style="left:960.5px;top:257.7px" width="8" height="8" viewBox="0 0 8 8"><path d="M1.500 4h5" fill="none" stroke="#555" stroke-width="1.0" stroke-linecap="round" stroke-linejoin="round"/></svg>
<svg style="left:969.5px;top:257.7px" width="8" height="8" viewBox="0 0 8 8"><path d="M1 4h6M4 1v6" fill="none" stroke="#f0f0f0" stroke-width="1.1" stroke-linecap="round" stroke-linejoin="round"/></svg>
<div class="a" style="left:959.8px;top:253.9px;width:0.6px;height:15.5px;background:#353535;"></div>
<div class="a" style="left:969px;top:253.9px;width:0.6px;height:15.5px;background:#353535;"></div>
<div class="a" style="left:772.500px;top:271.1px;width:169px;height:16.500px;background:#17549c;border:0.6px solid #12386a"></div>
<div class="t " style="left:774.6px;top:274.5px;color:#ffffff;font-size:7.56px;">Opacity (%)</div>
<div class="t " style="left:942.8px;top:274.5px;color:#e6e6e6;font-size:7.44px;">100.0</div>
<svg style="left:960.5px;top:275.40000000000003px" width="8" height="8" viewBox="0 0 8 8"><path d="M1.500 4h5" fill="none" stroke="#f0f0f0" stroke-width="1.1" stroke-linecap="round" stroke-linejoin="round"/></svg>
<svg style="left:969.5px;top:275.40000000000003px" width="8" height="8" viewBox="0 0 8 8"><path d="M1 4h6M4 1v6" fill="none" stroke="#555" stroke-width="1.0" stroke-linecap="round" stroke-linejoin="round"/></svg>
<div class="a" style="left:959.8px;top:271.6px;width:0.6px;height:15.5px;background:#353535;"></div>
<div class="a" style="left:969px;top:271.6px;width:0.6px;height:15.5px;background:#353535;"></div>
<div class="a" style="left:769.5px;top:289.3px;width:210px;height:20.2px;background:#323232;"></div>
<div class="a" style="left:770.400px;top:290.400px;width:28.300px;height:17.200px;background:#3a3a3a;border-radius:2px 0 0 2px"></div>
<div class="a" style="left:798.700px;top:290.400px;width:29.300px;height:17.200px;background:#222222;border-radius:0 2px 2px 0"></div>
<svg style="left:774.500px;top:294.500px" width="9" height="9" viewBox="0 0 10 10"><path class="ic" d="M1.300 1v8" stroke-width="0.900"/><path class="fi" d="M2.500 1.500h4v2h-4zM2.500 4h6v2h-6zM2.500 6.500h3v2h-3z"/></svg>
<svg style="left:785.3px;top:295.2px" width="8" height="8" viewBox="0 0 8 8"><path d="M1.800 5l2.200-2.300l2.200 2.300" fill="none" stroke="#ececec" stroke-width="1.1" stroke-linecap="round" stroke-linejoin="round"/></svg>
<svg style="left:805px;top:295px" width="8" height="8" viewBox="0 0 7 8"><path d="M0.500 1.500h5M1.500 4h5M0.800 6.500h5" stroke="#0a0a0a" stroke-width="1.500" stroke-linecap="round"/></svg>
<svg style="left:814.6px;top:295.2px" width="8" height="8" viewBox="0 0 8 8"><path d="M1.800 5l2.200-2.300l2.200 2.300" fill="none" stroke="#ececec" stroke-width="1.1" stroke-linecap="round" stroke-linejoin="round"/></svg>
<div class="a" style="left:769.5px;top:309.4px;width:210px;height:0.6px;background:#3a3a3a;"></div>
<svg style="left:768.800px;top:313.800px" width="9.600" height="9.600" viewBox="0 0 10 10"><path class="ic" d="M1.500 1.500h6.500M1.500 1.500v6.500h3" stroke-width="1"/><path class="ic" d="M8.500 1.800l-4.500 6.500" stroke-width="1.700"/></svg>
<div class="t " style="left:779px;top:313.6px;color:#e6e6e6;font-size:7.50px;">Fill and Stroke (Shift+Ctrl+F)</div>
<svg style="left:946.9px;top:313.0px" width="7" height="7" viewBox="0 0 7 7"><rect x="0.600" y="0.600" width="5.800" height="5.800" rx="1.300" fill="none" stroke="#666" stroke-width="0.800"/><rect x="2.300" y="2.300" width="2.400" height="2.400" fill="#8a8a8a"/></svg>
<svg style="left:966.3px;top:313.0px" width="7" height="7" viewBox="0 0 7 7"><rect x="0.600" y="0.600" width="5.800" height="5.800" rx="1.300" fill="none" stroke="#666" stroke-width="0.800"/><rect x="2.300" y="2.300" width="2.400" height="2.400" fill="#8a8a8a"/></svg>
<div class="a" style="left:771.700px;top:330px;width:206px;height:172.200px;background:#2b2b2b;border:0.7px solid #383838"></div>
<div class="a" style="left:772.4px;top:352.2px;width:204.6px;height:0.6px;background:#383838;"></div>
<div class="a" style="left:783px;top:336.1px;width:8.9px;height:8.7px;background:#f0f0f0;border-radius:0.8px"></div>
<div class="t b" style="left:794.3px;top:335.9px;color:#ffffff;font-size:7.56px;">Fill</div>
<div class="a" style="left:776.9px;top:349.4px;width:32px;height:1.6px;background:#2a6fc0;"></div>
<div class="a" style="left:819.600px;top:336.300px;width:8.400px;height:8.400px;border:1.1px solid #d0d0d0;border-radius:0.8px"></div>
<div class="t b" style="left:830.6px;top:335.9px;color:#a8a8a8;font-size:7.56px;">Stroke paint</div>
<svg style="left:885.500px;top:336px" width="9" height="9" viewBox="0 0 9 9"><path d="M0.500 2h4.500M6.500 2h2M0.500 7.500h8" stroke="#d0d0d0" stroke-width="1" stroke-dasharray="1.500 0.800"/><path d="M6 0.500l2 1.500l-2 1.500z" fill="#d0d0d0"/><path d="M0.500 5h8" stroke="#d0d0d0" stroke-width="1"/></svg>
<div class="t b" style="left:896.6px;top:335.9px;color:#a8a8a8;font-size:7.56px;">Stroke style</div>
<div class="a" style="left:835.6px;top:355px;width:19.200px;height:18.600px;background:#222222;border-radius:3px"></div>
<div class="a" style="left:953.3px;top:355px;width:19.200px;height:18.600px;background:#222222;border-radius:3px"></div>
<svg style="left:782.3px;top:360.6px" width="8" height="8" viewBox="0 0 8 8"><path d="M2 2l4 4M6 2l-4 4" fill="none" stroke="#ececec" stroke-width="1.0" stroke-linecap="round" stroke-linejoin="round"/></svg>
<div class="a" style="left:801.9px;top:360.20000000000005px;width:8.8px;height:8.8px;background:#f0f0f0;border-radius:0.8px"></div>
<div class="a" style="left:821.1px;top:360.20000000000005px;width:8.800px;height:8.800px;background:linear-gradient(90deg,#f0f0f0,#555 55%,#ddd);border-radius:0.8px"></div>
<div class="a" style="left:840.8000000000001px;top:360.20000000000005px;width:8.800px;height:8.800px;background:radial-gradient(closest-side,#fff 8%,#8a8a8a 45%,#484848 100%);border-radius:0.8px"></div>
<svg style="left:860.0px;top:360.0px" width="9.200" height="9.200" viewBox="0 0 9 9"><rect x="0.500" y="0.500" width="8" height="8" fill="#3a3a3a" stroke="#eee" stroke-width="1"/><rect x="1" y="1" width="3.500" height="3.500" fill="#eee"/><rect x="4.500" y="4.500" width="3.500" height="3.500" fill="#aaa"/></svg>
<svg style="left:879.6999999999999px;top:360.0px" width="9.200" height="9.200" viewBox="0 0 9 9"><path d="M0.500 2.500h8M0.500 6.500h8M2.500 0.500v8M6.500 0.500v8" stroke="#eee" stroke-width="0.900" stroke-dasharray="1.200 0.800"/><path d="M1.500 1.500h2v2h-2zM5.500 1.500h2v2h-2zM1.500 5.500h2v2h-2zM5.500 5.500h2v2h-2z" fill="#eee"/></svg>
<div class="a" style="left:899.6px;top:360.20000000000005px;width:8.800px;height:8.800px;background:#f0f0f0;border:1.500px solid #b0b0b0;border-radius:0.8px"></div>
<div class="t b" style="left:921.3px;top:359.8px;color:#f0f0f0;font-size:10.47px;">?</div>
<svg style="left:938.4000000000001px;top:359.8px" width="9.600" height="9.600" viewBox="0 0 9 9"><path d="M2.300 1.300C0.300 4 1.800 7.600 4.500 7.600S8.700 4 6.700 1.300" fill="none" stroke="#f0f0f0" stroke-width="1.900" stroke-linecap="butt"/></svg>
<svg style="left:957.6px;top:359.6px" width="10.600" height="10.200" viewBox="0 0 9 9"><path d="M1.300 1.300c1-1 2.500-0.500 3.200 0.700c0.700-1.200 2.200-1.700 3.200-0.700c1 3-0.500 6.200-3.200 7c-2.700-0.800-4.200-4-3.200-7z" fill="#f4f4f4"/></svg>
<div class="t b" style="left:776.9px;top:377.8px;color:#f0f0f0;font-size:7.44px;">Radial gradient</div>
<div class="a" style="left:775px;top:391.200px;width:199.700px;height:80.600px;background:#272727;border:0.6px solid #353535"></div>
<div class="a" style="left:775.6px;top:391.8px;width:198.5px;height:12.2px;background:#2d2d2d;"></div>
<div class="a" style="left:775.6px;top:404px;width:198.5px;height:0.6px;background:#383838;"></div>
<div class="a" style="left:818.6px;top:391.8px;width:0.6px;height:12.2px;background:#3a3a3a;"></div>
<div class="a" style="left:916.3px;top:391.8px;width:0.6px;height:12.2px;background:#3a3a3a;"></div>
<div class="t " style="left:778px;top:392.8px;color:#b4b4b4;font-size:7.56px;">Gradient</div>
<div class="t " style="left:822px;top:392.8px;color:#b4b4b4;font-size:7.56px;">Name</div>
<div class="t " style="left:920px;top:392.8px;color:#b4b4b4;font-size:7.56px;">#</div>
<div class="a" style="left:775.6px;top:460.6px;width:198.5px;height:11.2px;background:#17549c;"></div>
<div class="a" style="left:779.400px;top:404.3px;width:34.600px;height:9.600px;background:linear-gradient(90deg,#f4f4f4,#c8c8c8 45%,#5a5a5a 80%,#0a0a0a)"></div>
<div class="t " style="left:821.1px;top:404.70000000000005px;color:#ececec;font-size:7.56px;">3945</div>
<div class="t " style="left:919.4px;top:404.70000000000005px;color:#ececec;font-size:7.56px;">1</div>
<div class="a" style="left:779.400px;top:415.59999999999997px;width:34.600px;height:9.600px;background:linear-gradient(90deg,rgba(255,255,255,0.1),#fff 75%),repeating-conic-gradient(#b8b8b8 0 25%,#e8e8e8 0 50%) 0 0/3px 3px"></div>
<div class="t " style="left:821.1px;top:416.0px;color:#ececec;font-size:7.56px;">3837</div>
<div class="t " style="left:919.4px;top:416.0px;color:#ececec;font-size:7.56px;">2</div>
<div class="a" style="left:779.400px;top:426.8px;width:34.600px;height:9.600px;background:linear-gradient(90deg,#f4f4f4,#c0c0c0 45%,#555 80%,#0a0a0a)"></div>
<div class="t " style="left:821.1px;top:427.20000000000005px;color:#ececec;font-size:7.56px;">3864</div>
<div class="t " style="left:919.4px;top:427.20000000000005px;color:#ececec;font-size:7.56px;">1</div>
<div class="a" style="left:779.400px;top:438.3px;width:34.600px;height:9.600px;background:linear-gradient(90deg,#29c8f0,#1b8fc4 35%,#14508a 70%,#0a1648)"></div>
<div class="t " style="left:821.1px;top:438.70000000000005px;color:#ececec;font-size:7.56px;">3808</div>
<div class="t " style="left:919.4px;top:438.70000000000005px;color:#ececec;font-size:7.56px;">4</div>
<div class="a" style="left:779.400px;top:449.59999999999997px;width:34.600px;height:9.600px;background:linear-gradient(90deg,#1c1c1c,#8a8a8a 40%,#9a9a9a 55%,#2a2a2a)"></div>
<div class="t " style="left:821.1px;top:450.0px;color:#ececec;font-size:7.56px;">3797</div>
<div class="t " style="left:919.4px;top:450.0px;color:#ececec;font-size:7.56px;">4</div>
<div class="a" style="left:779.400px;top:461.09999999999997px;width:34.600px;height:9.600px;background:linear-gradient(90deg,#2ccaf2,#1b86bb 45%,#0c1c52)"></div>
<div class="t " style="left:821.1px;top:461.5px;color:#ececec;font-size:7.56px;">3836</div>
<div class="t " style="left:919.4px;top:461.5px;color:#ececec;font-size:7.56px;">2</div>
<svg style="left:780.0px;top:479.8px" width="8" height="8" viewBox="0 0 8 8"><path d="M1 4h6M4 1v6" fill="none" stroke="#ececec" stroke-width="1.25" stroke-linecap="round" stroke-linejoin="round"/></svg>
<svg style="left:799.500px;top:479.500px" width="8.500" height="8.500" viewBox="0 0 9 9"><path d="M1 8l0.600-2.300l4.800-4.800l1.700 1.700l-4.800 4.800z" fill="#f0f0f0"/></svg>
<div class="t " style="left:872px;top:511.29999999999995px;color:#e0e0e0;font-size:7.56px;">Blend mode:</div>
<div class="a" style="left:914.600px;top:507.59999999999997px;width:57.200px;height:17.600px;background:#333333;border:0.8px solid #232323;border-radius:2.5px"></div>
<div class="t " style="left:920.7px;top:511.29999999999995px;color:#e6e6e6;font-size:7.67px;">Normal</div>
<svg style="left:959.500px;top:514.8px" width="6" height="4" viewBox="0 0 6 4"><path d="M0.300 0.300h5.400l-2.700 3.200z" fill="#eee"/></svg>
<div class="a" style="left:769.5px;top:531.5px;width:210px;height:0.6px;background:#353535;"></div>
<div class="a" style="left:772.500px;top:535.3px;width:168.2px;height:16.500px;background:#222222;border:0.6px solid #1a1a1a"></div>
<div class="t " style="left:774.6px;top:538.6999999999999px;color:#e6e6e6;font-size:7.56px;">Blur (%)</div>
<div class="t " style="left:943.2px;top:538.6999999999999px;color:#e6e6e6;font-size:7.56px;">0.0</div>
<svg style="left:960.5px;top:539.5999999999999px" width="8" height="8" viewBox="0 0 8 8"><path d="M1.500 4h5" fill="none" stroke="#555" stroke-width="1.0" stroke-linecap="round" stroke-linejoin="round"/></svg>
<svg style="left:969.5px;top:539.5999999999999px" width="8" height="8" viewBox="0 0 8 8"><path d="M1 4h6M4 1v6" fill="none" stroke="#f0f0f0" stroke-width="1.1" stroke-linecap="round" stroke-linejoin="round"/></svg>
<div class="a" style="left:959.8px;top:535.8px;width:0.6px;height:15.5px;background:#353535;"></div>
<div class="a" style="left:969px;top:535.8px;width:0.6px;height:15.5px;background:#353535;"></div>
<div class="a" style="left:772.500px;top:553.0px;width:168.2px;height:16.500px;background:#17549c;border:0.6px solid #12386a"></div>
<div class="t " style="left:774.6px;top:556.4px;color:#ffffff;font-size:7.56px;">Opacity (%)</div>
<div class="t " style="left:942.8px;top:556.4px;color:#e6e6e6;font-size:7.44px;">100.0</div>
<svg style="left:960.5px;top:557.3px" width="8" height="8" viewBox="0 0 8 8"><path d="M1.500 4h5" fill="none" stroke="#f0f0f0" stroke-width="1.1" stroke-linecap="round" stroke-linejoin="round"/></svg>
<svg style="left:969.5px;top:557.3px" width="8" height="8" viewBox="0 0 8 8"><path d="M1 4h6M4 1v6" fill="none" stroke="#555" stroke-width="1.0" stroke-linecap="round" stroke-linejoin="round"/></svg>
<div class="a" style="left:959.8px;top:553.5px;width:0.6px;height:15.5px;background:#353535;"></div>
<div class="a" style="left:969px;top:553.5px;width:0.6px;height:15.5px;background:#353535;"></div>
<div class="a" style="left:979.5px;top:89.5px;width:20.5px;height:490px;background:#333333;"></div>
<div class="a" style="left:983.500px;top:91.7px;width:22px;height:17.300px;background:#222222;border-radius:3px"></div>
<svg style="left:987.25px;top:95.65px" width="9.5" height="9.5" viewBox="0 0 10 10" ><path class="ic" d="M3.300 1.700h1.700a3.300 3.300 0 0 1 0 6.600h-1.700" stroke-width="1.900" style="stroke-linecap:butt"/><path d="M1.300 1.700h2M1.300 8.300h2" stroke="#bbb" stroke-width="1.900"/><path d="M2.300 3.500a2 2 0 0 0 0 3" stroke="#777" stroke-width="0.800" fill="none"/></svg>
<div class="a" style="left:983.500px;top:118.6px;width:22px;height:17.300px;background:#222222;border-radius:3px"></div>
<svg style="left:987.25px;top:122.55px" width="9.5" height="9.5" viewBox="0 0 10 10" ><path class="ic" d="M3.300 1.700h1.700a3.300 3.300 0 0 1 0 6.600h-1.700" stroke-width="1.900" style="stroke-linecap:butt"/><path d="M1.300 1.700h2M1.300 8.300h2" stroke="#bbb" stroke-width="1.900"/><path d="M2.300 3.500a2 2 0 0 0 0 3" stroke="#777" stroke-width="0.800" fill="none"/></svg>
<div class="a" style="left:983.500px;top:138.4px;width:22px;height:17.300px;background:#222222;border-radius:3px"></div>
<svg style="left:987.25px;top:142.35px" width="9.5" height="9.5" viewBox="0 0 10 10" ><path class="ic" d="M2 8.500v-6.500h6.500" stroke-width="1.300"/><path class="ic" d="M4.500 5h4M4.500 5v3.500" stroke-width="0.800" stroke-dasharray="1 0.800"/></svg>
<div class="a" style="left:983.500px;top:157.8px;width:22px;height:17.300px;background:#222222;border-radius:3px"></div>
<svg style="left:987.25px;top:161.75px" width="9.5" height="9.5" viewBox="0 0 10 10" ><path class="ic" d="M1.500 8.500h7v-7" stroke-width="0.900" stroke-dasharray="1 0.800"/><path class="fi" d="M8.500 8.500l-5 0l5-5z"/></svg>
<div class="a" style="left:983.500px;top:176.8px;width:22px;height:17.300px;background:#222222;border-radius:3px"></div>
<svg style="left:987.25px;top:180.75px" width="9.5" height="9.5" viewBox="0 0 10 10" ><path class="ic" d="M2 1.500h6v7h-6z" stroke-width="0.900" stroke-dasharray="1.200 0.800"/><path class="ic" d="M0.800 5h3M6.200 5h3" stroke-width="1.300"/></svg>
<div class="a" style="left:983.500px;top:196px;width:22px;height:17.300px;background:#222222;border-radius:3px"></div>
<svg style="left:987.25px;top:199.95px" width="9.5" height="9.5" viewBox="0 0 10 10" ><path class="ic" d="M1.500 1.500h7v7h-7z" stroke-width="0.900" stroke-dasharray="1.200 0.800"/><path class="ic" d="M5 1.500v7M1.500 5h7" stroke-width="1"/></svg>
<div class="a" style="left:983.500px;top:222.5px;width:22px;height:17.300px;background:#222222;border-radius:3px"></div>
<svg style="left:987.25px;top:226.45px" width="9.5" height="9.5" viewBox="0 0 10 10" ><path class="ic" d="M3.300 1.700h1.700a3.300 3.300 0 0 1 0 6.600h-1.700" stroke-width="1.900" style="stroke-linecap:butt"/><path d="M1.300 1.700h2M1.300 8.300h2" stroke="#bbb" stroke-width="1.900"/><path d="M2.300 3.500a2 2 0 0 0 0 3" stroke="#777" stroke-width="0.800" fill="none"/></svg>
<div class="a" style="left:983.500px;top:241.3px;width:22px;height:17.300px;background:#222222;border-radius:3px"></div>
<svg style="left:987.25px;top:245.25px" width="9.5" height="9.5" viewBox="0 0 10 10" ><path class="ic" d="M1.500 8.300c0-6 7-6 7 0" stroke-width="1.100"/><path class="ic" d="M2.300 1.500h5.400" stroke-width="0.900" stroke-dasharray="0.100 1.700"/></svg>
<div class="a" style="left:983.500px;top:260.5px;width:22px;height:17.300px;background:#222222;border-radius:3px"></div>
<svg style="left:987.25px;top:264.45px" width="9.5" height="9.5" viewBox="0 0 10 10" ><path class="ic" d="M1.500 8l7-6M1.500 5.800l7-1.600" stroke-width="0.900"/><circle class="fi" cx="5" cy="5" r="1.500"/></svg>
<div class="a" style="left:983.500px;top:279.2px;width:22px;height:17.300px;background:#222222;border-radius:3px"></div>
<svg style="left:987.25px;top:283.15px" width="9.5" height="9.5" viewBox="0 0 10 10" ><path class="ic" d="M2 1.500c4.500 0.500 6.500 3 3.800 5.800" stroke-width="1.100"/><circle class="fi" cx="4.500" cy="8" r="1.400"/></svg>
<div class="a" style="left:983.500px;top:298.5px;width:22px;height:17.300px;background:#222222;border-radius:3px"></div>
<svg style="left:987.25px;top:302.45px" width="9.5" height="9.5" viewBox="0 0 10 10" ><path class="ic" d="M1.500 8.300c0-6 7-6 7 0" stroke-width="1.100"/><circle class="fi" cx="5" cy="3.600" r="1.100"/></svg>
<div class="a" style="left:983.500px;top:317.7px;width:22px;height:17.300px;background:#222222;border-radius:3px"></div>
<svg style="left:987.25px;top:321.65px" width="9.5" height="9.5" viewBox="0 0 10 10" ><path class="ic" d="M3 1.300v7.400M7.300 1.300v7.400M3 5h4.300" stroke-width="1"/><circle class="fi" cx="3" cy="3" r="1.100"/><circle class="fi" cx="3" cy="7" r="1.100"/><circle class="fi" cx="7.300" cy="5" r="1.100"/></svg>
<div class="a" style="left:983.500px;top:343.8px;width:22px;height:17.300px;background:#222222;border-radius:3px"></div>
<svg style="left:987.25px;top:347.75px" width="9.5" height="9.5" viewBox="0 0 10 10" ><path class="ic" d="M3.300 1.700h1.700a3.300 3.300 0 0 1 0 6.600h-1.700" stroke-width="1.900" style="stroke-linecap:butt"/><path d="M1.300 1.700h2M1.300 8.300h2" stroke="#bbb" stroke-width="1.900"/><path d="M2.300 3.500a2 2 0 0 0 0 3" stroke="#777" stroke-width="0.800" fill="none"/></svg>
<div class="a" style="left:983.500px;top:363.3px;width:22px;height:17.300px;background:#222222;border-radius:3px"></div>
<svg style="left:987.25px;top:367.25px" width="9.5" height="9.5" viewBox="0 0 10 10" ><path class="ic" d="M5 1.500v7M1.500 5h7M2.500 2.500l5 5M7.500 2.500l-5 5" stroke-width="0.900"/><circle class="fi" cx="5" cy="5" r="1.800"/></svg>
<div class="a" style="left:983.500px;top:382.6px;width:22px;height:17.300px;background:#222222;border-radius:3px"></div>
<svg style="left:987.25px;top:386.55px" width="9.5" height="9.5" viewBox="0 0 10 10" ><path class="ic" d="M3 3a2 2 0 1 1 2.500 2" stroke-width="1.100"/><path class="ic" d="M5 5.500v3.500M3.200 7.300h3.600M3.800 6l2.400 2.600M6.200 6l-2.400 2.600" stroke-width="0.700"/></svg>
<svg style="left:987.25px;top:405.75px" width="9.5" height="9.5" viewBox="0 0 10 10" ><path class="ic" d="M2.500 8l2.500-6.500l2.500 6.500M3.500 5.500h3" stroke-width="1.300"/><path class="ic" d="M1 9h5" stroke-width="0.800"/></svg>
<div class="a" style="left:983.500px;top:428.2px;width:22px;height:17.300px;background:#222222;border-radius:3px"></div>
<svg style="left:987.25px;top:432.15px" width="9.5" height="9.5" viewBox="0 0 10 10" ><path class="ic" d="M2 1.500h6v7h-6z" stroke-width="1"/></svg>
<div class="a" style="left:983.500px;top:447.4px;width:22px;height:17.300px;background:#222222;border-radius:3px"></div>
<svg style="left:987.25px;top:451.35px" width="9.5" height="9.5" viewBox="0 0 10 10" ><path class="fi" d="M1 1h8v8h-8z" opacity="0.75"/><path d="M1 3.700h8M1 6.300h8M3.700 1v8M6.300 1v8" stroke="#444" stroke-width="0.700"/></svg>
<div class="a" style="left:983.500px;top:466.7px;width:22px;height:17.300px;background:#222222;border-radius:3px"></div>
<svg style="left:987.25px;top:470.65px" width="9.5" height="9.5" viewBox="0 0 10 10" ><path class="ic" d="M3.500 1v7.500M1 6.500h8" stroke-width="1"/></svg>
<div class="a" style="left:0px;top:600px;width:1000px;height:6.3px;background:#333333;"></div>
<div class="a" style="left:0px;top:606.3px;width:1000px;height:18.7px;background:#2a2a2a;"></div>
<div class="a" style="left:0px;top:588.6px;width:1000px;height:11.6px;background:#333333;"></div>
<div class="a" style="left:0;top:588.6px;width:985.75px;height:11.6px;background:linear-gradient(90deg,#d5fff6 0 2.5px,#0b2822 2.50px 12.85px,#165044 12.85px 23.20px,#217867 23.20px 33.55px,#2ca089 33.55px 43.90px,#37c8ab 43.90px 54.25px,#5fd3bc 54.25px 64.60px,#87decd 64.60px 74.95px,#afe9dd 74.95px 85.30px,#d7f4ee 85.30px 95.65px,#1c2422 95.65px 106.00px,#374845 106.00px 116.35px,#536c67 116.35px 126.70px,#6f918a 126.70px 137.05px,#93aca7 137.05px 147.40px,#b7c8c4 147.40px 157.75px,#dbe3e1 157.75px 168.10px,#00222b 168.10px 178.45px,#004455 178.45px 188.80px,#006680 188.80px 199.15px,#0088aa 199.15px 209.50px,#00aad4 209.50px 219.85px,#00ccff 219.85px 230.20px,#2ad4ff 230.20px 240.55px,#55ddff 240.55px 250.90px,#80e5ff 250.90px 261.25px,#aaeeff 261.25px 271.60px,#d5f6ff 271.60px 281.95px,#0b2228 281.95px 292.30px,#164450 292.30px 302.65px,#216778 302.65px 313.00px,#2c89a0 313.00px 323.35px,#37abc8 323.35px 333.70px,#5fbcd3 333.70px 344.05px,#87cdde 344.05px 354.40px,#afdde9 354.40px 364.75px,#d7eef4 364.75px 375.10px,#1c2224 375.10px 385.45px,#374548 385.45px 395.80px,#53676c 395.80px 406.15px,#6f8a91 406.15px 416.50px,#93a7ac 416.50px 426.85px,#b7c4c8 426.85px 437.20px,#dbe2e3 437.20px 447.55px,#00112b 447.55px 457.90px,#002255 457.90px 468.25px,#003380 468.25px 478.60px,#0044aa 478.60px 488.95px,#0055d4 488.95px 499.30px,#0066ff 499.30px 509.65px,#2a7fff 509.65px 520.00px,#5599ff 520.00px 530.35px,#80b3ff 530.35px 540.70px,#aaccff 540.70px 551.05px,#d5e5ff 551.05px 561.40px,#0b1728 561.40px 571.75px,#162d50 571.75px 582.10px,#214478 582.10px 592.45px,#2c5aa0 592.45px 602.80px,#3771c8 602.80px 613.15px,#5f8dd3 613.15px 623.50px,#87aade 623.50px 633.85px,#afc6e9 633.85px 644.20px,#d7e3f4 644.20px 654.55px,#1c1f24 654.55px 664.90px,#373e48 664.90px 675.25px,#535d6c 675.25px 685.60px,#6f7c91 685.60px 695.95px,#939dac 695.95px 706.30px,#b7bec8 706.30px 716.65px,#dbdee3 716.65px 727.00px,#00002b 727.00px 737.35px,#000055 737.35px 747.70px,#000080 747.70px 758.05px,#0000aa 758.05px 768.40px,#0000d4 768.40px 778.75px,#0000ff 778.75px 789.10px,#2a2aff 789.10px 799.45px,#5555ff 799.45px 809.80px,#8080ff 809.80px 820.15px,#aaaaff 820.15px 830.50px,#d5d5ff 830.50px 840.85px,#0b0b28 840.85px 851.20px,#161650 851.20px 861.55px,#212178 861.55px 871.90px,#2c2ca0 871.90px 882.25px,#3737c8 882.25px 892.60px,#5f5fd3 892.60px 902.95px,#8787de 902.95px 913.30px,#afafe9 913.30px 923.65px,#d7d7f4 923.65px 934.00px,#1c1c24 934.00px 944.35px,#373748 944.35px 954.70px,#53536c 954.70px 965.05px,#6f6f91 965.05px 975.40px,#9393ac 975.40px 985.75px)"></div>
<div class="a" style="left:516.5px;top:602.3px;width:214px;height:3px;background:#9c9c9c;border-radius:2px"></div>
<svg style="left:991.5px;top:593.8px" width="6" height="8" viewBox="0 0 6 8"><path d="M4.5 1.2 L1.5 4 L4.500 6.800Z" fill="#e8e8e8"/></svg>
<div class="a" style="left:759.5px;top:578.8px;width:9.5px;height:9.5px;background:#3a3a3a;border-radius:2px"></div>
<svg style="left:759px;top:579px" width="9" height="9" viewBox="0 0 9 9"><g fill="none" stroke="#8a8a8a" stroke-width="0.9"><path d="M2.700 4V2.8a1.600 1.600 0 0 1 3.200 0V4"/><circle cx="3" cy="6" r="1.500"/><circle cx="5.800" cy="6" r="1.500"/></g></svg>
</body></html>
